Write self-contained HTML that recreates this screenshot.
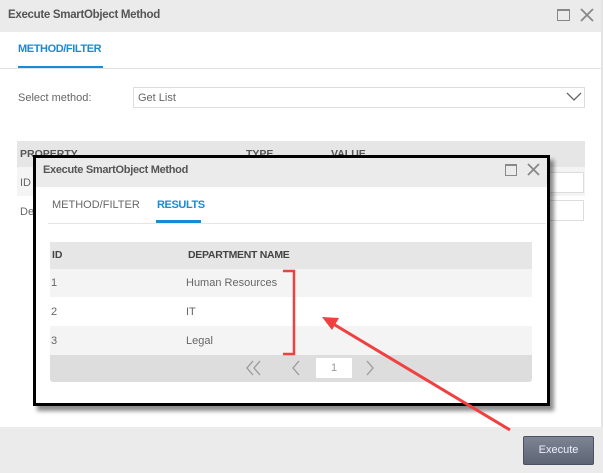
<!DOCTYPE html>
<html><head><meta charset="utf-8"><style>
*{margin:0;padding:0;box-sizing:border-box}
body{width:603px;height:473px;overflow:hidden;background:#fff;font-family:"Liberation Sans",sans-serif;font-size:11px;color:#666;position:relative}
.a{position:absolute}
.t{white-space:nowrap}
</style></head><body>
<div class="a" style="left:0;top:0;width:603px;height:32px;background:#ebebeb"></div>
<div class="a t" style="left:8px;top:9px;font-weight:bold;color:#555;font-size:11.5px;letter-spacing:-0.3px">Execute SmartObject Method</div>
<div class="a" style="left:557px;top:9px;width:13px;height:12px;border:1px solid #888;border-top-width:2px"></div>
<svg class="a" style="left:580px;top:8px" width="14" height="14"><path d="M1 1L13 13M13 1L1 13" stroke="#888" stroke-width="1.8"/></svg>
<div class="a" style="left:601px;top:0;width:2px;height:427px;background:#e4e4e4"></div>
<div class="a t" style="left:18px;top:43px;color:#1a8ad4;font-weight:bold;font-size:11px;letter-spacing:-0.4px">METHOD/FILTER</div>
<div class="a" style="left:18px;top:66px;width:85px;height:2px;background:#1a8ad4"></div>
<div class="a" style="left:0;top:68px;width:601px;height:1px;background:#e2e2e2"></div>
<div class="a t" style="left:18px;top:92px">Select method:</div>
<div class="a" style="left:133px;top:87px;width:452px;height:21px;border:1px solid #ddd"></div>
<div class="a t" style="left:138px;top:92px">Get List</div>
<svg class="a" style="left:566px;top:92px" width="16" height="10"><path d="M1 1L8 8L15 1" stroke="#666" stroke-width="1.3" fill="none"/></svg>
<div class="a" style="left:17px;top:141px;width:568px;height:26px;background:#e6e6e6"></div>
<div class="a t" style="left:20px;top:148px;font-weight:bold;color:#555;font-size:10.5px">PROPERTY</div>
<div class="a t" style="left:246px;top:148px;font-weight:bold;color:#555;font-size:10.5px">TYPE</div>
<div class="a t" style="left:331px;top:148px;font-weight:bold;color:#555;font-size:10.5px">VALUE</div>
<div class="a" style="left:17px;top:167px;width:568px;height:29px;background:#f4f4f4"></div>
<div class="a t" style="left:20px;top:177px">ID</div>
<div class="a t" style="left:20px;top:206px">De</div>
<div class="a" style="left:540px;top:172px;width:44px;height:21px;border:1px solid #ddd;background:#fff"></div>
<div class="a" style="left:540px;top:200px;width:44px;height:21px;border:1px solid #ddd;background:#fff"></div>
<div class="a" style="left:0;top:427px;width:603px;height:46px;background:#ebebeb"></div>
<div class="a t" style="left:523px;top:436px;width:71px;height:29px;background:linear-gradient(#7d8595,#5d6574);border:1px solid #4a5160;border-radius:2px;color:#eef;text-align:center;line-height:27px;font-size:11px">Execute</div>
<div class="a" style="left:33px;top:155px;width:517px;height:251px;border:3px solid #000;background:#fff;box-shadow:4px 5px 4px rgba(0,0,0,0.45)"></div>
<div class="a" style="left:36px;top:158px;width:511px;height:29px;background:#ebebeb"></div>
<div class="a t" style="left:43px;top:164px;font-weight:bold;color:#555;font-size:11px;letter-spacing:-0.3px">Execute SmartObject Method</div>
<div class="a" style="left:505px;top:164px;width:12px;height:12px;border:1px solid #888;border-top-width:2px"></div>
<svg class="a" style="left:527px;top:163px" width="13" height="13"><path d="M1 1L12 12M12 1L1 12" stroke="#888" stroke-width="1.8"/></svg>
<div class="a t" style="left:52px;top:199px;font-size:11px">METHOD/FILTER</div>
<div class="a t" style="left:157px;top:199px;color:#1a8ad4;font-weight:bold;font-size:11px;letter-spacing:-0.4px">RESULTS</div>
<div class="a" style="left:156px;top:220px;width:45px;height:3px;background:#1a8ad4"></div>
<div class="a" style="left:48px;top:223px;width:498px;height:1px;background:#e6e6e6"></div>
<div class="a" style="left:50px;top:242px;width:482px;height:27px;background:#e6e6e6"></div>
<div class="a t" style="left:52px;top:249px;font-weight:bold;color:#444;font-size:10.5px">ID</div>
<div class="a t" style="left:188px;top:249px;font-weight:bold;color:#444;font-size:10.5px;letter-spacing:-0.3px">DEPARTMENT NAME</div>
<div class="a" style="left:50px;top:269px;width:482px;height:28px;background:#f4f4f4"></div>
<div class="a" style="left:50px;top:326px;width:482px;height:29px;background:#f4f4f4"></div>
<div class="a t" style="left:51px;top:277px">1</div><div class="a t" style="left:186px;top:277px">Human Resources</div>
<div class="a t" style="left:51px;top:306px">2</div><div class="a t" style="left:186px;top:306px">IT</div>
<div class="a t" style="left:51px;top:335px">3</div><div class="a t" style="left:186px;top:335px">Legal</div>
<div class="a" style="left:50px;top:355px;width:482px;height:27px;background:#ddd;border-radius:0 0 3px 3px"></div>
<svg class="a" style="left:244px;top:360px" width="20" height="16"><path d="M9 1L3 8L9 15M16 1L10 8L16 15" stroke="#999" stroke-width="1.3" fill="none"/></svg>
<svg class="a" style="left:290px;top:360px" width="12" height="16"><path d="M9 1L3 8L9 15" stroke="#999" stroke-width="1.3" fill="none"/></svg>
<div class="a t" style="left:316px;top:358px;width:36px;height:20px;background:#fff;text-align:center;line-height:20px;color:#999">1</div>
<svg class="a" style="left:364px;top:360px" width="12" height="16"><path d="M3 1L9 8L3 15" stroke="#999" stroke-width="1.3" fill="none"/></svg>
<svg class="a" style="left:0;top:0" width="603" height="473">
<path d="M283 271H294V354H283" stroke="#f04040" stroke-width="2.5" fill="none"/>
<line x1="510" y1="430" x2="330" y2="322" stroke="#f04040" stroke-width="3"/>
<path d="M322 317L339 318L332 330Z" fill="#f04040"/>
</svg>
</body></html>
